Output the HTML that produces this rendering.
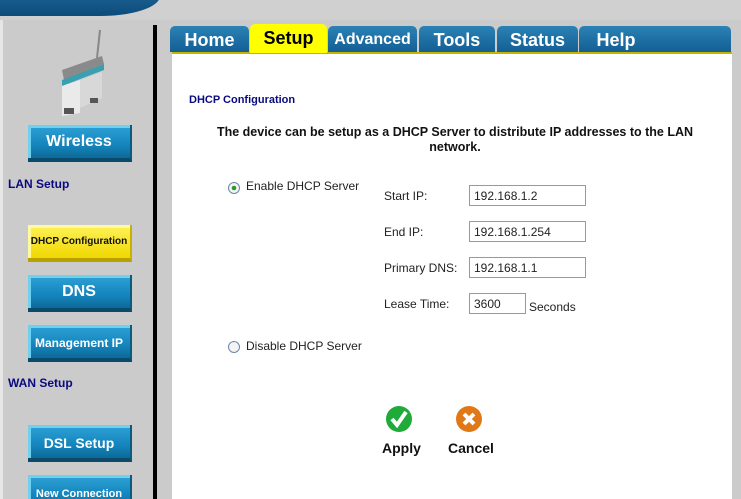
<!DOCTYPE html>
<html><head><style>
*{margin:0;padding:0;box-sizing:border-box}
html,body{width:741px;height:499px;overflow:hidden}
body{background:#cbcbcb;font-family:"Liberation Sans",sans-serif;position:relative}
.a{position:absolute}
.btn{position:absolute;left:28px;width:104px;height:37px;background:linear-gradient(#2ea3d6,#1585bd 60%,#0d6a98);border-bottom:4px solid #0b4a6a;border-right:2px solid #0b5a80;color:#fff;font-weight:bold;text-align:center;box-shadow:inset 3px 3px 0 #6fd0f0}
.tab{position:absolute;top:26px;height:26px;background:linear-gradient(#2b82b5,#135f94);color:#fff;font-weight:bold;font-size:18px;text-align:center;line-height:28px;border-radius:5px 5px 0 0}
.lbl{position:absolute;font-size:12px;color:#222}
.inp{position:absolute;height:21px;border:1px solid #999;background:#fff;font-size:12px;padding:3px 0 0 4px;color:#222}
.sec{position:absolute;left:8px;color:#0a0a80;font-weight:bold;font-size:12px}
</style></head><body>
<div class="a" style="left:0;top:0;width:741px;height:20px;background:#d0d0d0"></div>
<div class="a" style="left:370px;top:-20px;font-size:22px;font-weight:bold;color:#a8a8a8;letter-spacing:2px">Wireless ADSL Router</div>
<div class="a" style="left:0;top:-30px;width:160px;height:46px;background:linear-gradient(#2a75a8,#0d4c7c);border-radius:0 0 60px 0/0 0 20px 0"></div>
<div class="a" style="left:0;top:20px;width:3px;height:479px;background:#e6e6e6"></div>
<div class="a" style="left:153px;top:25px;width:4px;height:474px;background:#000"></div>
<div class="a" style="left:172px;top:52px;width:560px;height:447px;background:#fff;border-top:2px solid #c8b400"></div>
<svg class="a" style="left:40px;top:28px" width="70" height="90" viewBox="0 0 70 90"><line x1="60" y1="2" x2="57" y2="30" stroke="#888" stroke-width="2"/><polygon points="22,42 62,28 64,36 24,52" fill="#8a8a8a"/><polygon points="22,52 64,36 64,42 22,58" fill="#3aa0b0"/><polygon points="22,58 40,52 40,85 22,88" fill="#eaeaea"/><polygon points="40,52 62,44 62,70 40,80" fill="#d8d8d8"/><rect x="24" y="80" width="10" height="6" fill="#555"/><rect x="50" y="70" width="8" height="5" fill="#555"/></svg>
<div class="btn" style="top:125px;font-size:16px;line-height:34px">Wireless</div>
<div class="sec" style="top:177px">LAN Setup</div>
<div class="btn" style="top:225px;background:linear-gradient(#fff25a,#f0d800);border-bottom-color:#b8a000;border-right-color:#c8b000;box-shadow:inset 3px 3px 0 #fffaa0;color:#111;font-size:10px;line-height:34px">DHCP Configuration</div>
<div class="btn" style="top:275px;font-size:16px;line-height:34px">DNS</div>
<div class="btn" style="top:325px;font-size:12px;line-height:36px">Management IP</div>
<div class="sec" style="top:376px">WAN Setup</div>
<div class="btn" style="top:425px;font-size:14px;line-height:36px">DSL Setup</div>
<div class="btn" style="top:475px;font-size:11px;line-height:38px">New Connection</div>
<div class="tab" style="left:170px;width:79px">Home</div>
<div class="tab" style="left:250px;width:77px;top:24px;height:29px;background:#ffff00;color:#000">Setup</div>
<div class="tab" style="left:328px;width:89px;font-size:16px">Advanced</div>
<div class="tab" style="left:419px;width:76px">Tools</div>
<div class="tab" style="left:497px;width:81px">Status</div>
<div class="tab" style="left:579px;width:152px;text-indent:-78px">Help</div>
<div class="a" style="left:189px;top:94px;font-size:11px;font-weight:bold;color:#0a0a80">DHCP Configuration</div>
<div class="a" style="left:190px;top:125px;width:530px;text-align:center;font-size:12.5px;font-weight:bold;color:#111;line-height:15px">The device can be setup as a DHCP Server to distribute IP addresses to the LAN network.</div>
<svg class="a" style="left:227px;top:181px" width="14" height="14"><circle cx="7" cy="7" r="5.5" fill="#f4f4f4" stroke="#6c88a8"/><circle cx="7" cy="7" r="2.3" fill="#2a9a2a"/></svg>
<div class="lbl" style="left:246px;top:179px">Enable DHCP Server</div>
<svg class="a" style="left:227px;top:340px" width="14" height="14"><circle cx="7" cy="7" r="5.5" fill="#f4f4f4" stroke="#6c88a8"/></svg>
<div class="lbl" style="left:246px;top:339px">Disable DHCP Server</div>
<div class="lbl" style="left:384px;top:189px">Start IP:</div>
<div class="inp" style="left:469px;top:185px;width:117px">192.168.1.2</div>
<div class="lbl" style="left:384px;top:225px">End IP:</div>
<div class="inp" style="left:469px;top:221px;width:117px">192.168.1.254</div>
<div class="lbl" style="left:384px;top:261px">Primary DNS:</div>
<div class="inp" style="left:469px;top:257px;width:117px">192.168.1.1</div>
<div class="lbl" style="left:384px;top:297px">Lease Time:</div>
<div class="inp" style="left:469px;top:293px;width:57px">3600</div>
<div class="lbl" style="left:529px;top:300px">Seconds</div>
<svg class="a" style="left:385px;top:405px" width="28" height="28"><circle cx="14" cy="14" r="13" fill="#1faa3a"/><path d="M7 14 L12 20 L21 7" stroke="#fff" stroke-width="4" fill="none"/></svg>
<svg class="a" style="left:455px;top:405px" width="28" height="28"><circle cx="14" cy="14" r="13" fill="#e07818"/><path d="M9 9 L19 19 M19 9 L9 19" stroke="#fff" stroke-width="4"/></svg>
<div class="a" style="left:382px;top:440px;font-size:14px;font-weight:bold;color:#111">Apply</div>
<div class="a" style="left:448px;top:440px;font-size:14px;font-weight:bold;color:#111">Cancel</div>
</body></html>
